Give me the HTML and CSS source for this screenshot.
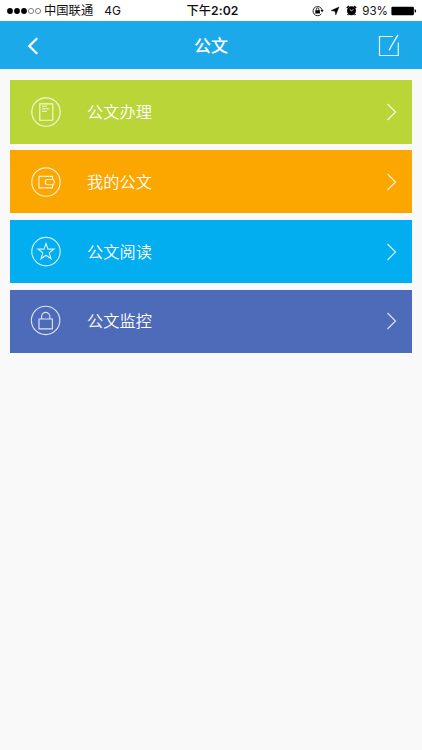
FILE: index.html
```html
<!DOCTYPE html>
<html lang="zh-CN">
<head>
<meta charset="utf-8">
<title>公文</title>
<link rel="stylesheet" href="styles.css">
</head>
<body>
<div class="status">
  <div class="status-left">
    <svg class="signal" width="35" height="8" viewBox="0 0 35 8"><g fill="#000"><circle cx="3" cy="4" r="2.9"/><circle cx="10" cy="4" r="2.9"/><circle cx="17" cy="4" r="2.9"/></g><g fill="none" stroke="#333" stroke-width=".6"><circle cx="24" cy="4" r="2.6"/><circle cx="31" cy="4" r="2.6"/></g></svg>
    <span class="carrier">中国联通</span><span class="network">4G</span>
  </div>
  <div class="clock"><span class="period">下午</span>2:02</div>
  <div class="status-right">
    <svg class="lock" width="12" height="12" viewBox="0 0 12 12"><path d="M9.3 8.9A4.6 4.6 0 1 1 10.1 5" fill="none" stroke="#111" stroke-width=".9"/><path d="M8.5 5h3.2l-1.6 2.3z"/><path d="M3.3 5.2h4.6v3.3H3.3z"/><path d="M4.3 5.4V4.2a1.3 1.3 0 0 1 2.6 0v1.2" fill="none" stroke="#000" stroke-width=".8"/></svg>
    <svg class="locate" width="10" height="10" viewBox="0 0 10 10"><path d="M9 1 5.8 9.1 5 5.2 1 4.6z" stroke="#000" stroke-width=".4"/></svg>
    <svg class="alarm" width="11" height="11" viewBox="0 0 11 11"><circle cx="5.5" cy="5.7" r="4.5"/><path d="M.8 3.1 3 1M8 1l2.2 2.1M2.4 9.2l-.8.8M8.6 9.2l.8.8" stroke="#000" stroke-width="1.4"/><path d="M3.7 4.3 5.5 6l1.8-1.8" fill="none" stroke="#fff" stroke-width=".8"/></svg>
    <span class="percent">93%</span>
    <svg class="battery" width="26" height="10" viewBox="0 0 26 10"><rect x=".4" y=".8" width="22.5" height="8.5" rx="1.2"/><path d="M23.7 3.3q1.5.2 1.5 1.7t-1.5 1.7z"/></svg>
  </div>
</div>
<header class="header">
  <svg class="back" width="14" height="20" viewBox="0 0 14 20"><path d="M12.2 2.2 4.3 10l7.9 7.8" fill="none" stroke="#fff" stroke-width="2.3"/></svg>
  <h1 class="title">公文</h1>
  <svg class="edit" width="22" height="24" viewBox="0 0 22 24"><path d="M15 2.5H1.5v19h18.8V8.5" fill="none" stroke="#e4f7ff" stroke-width="1.2"/><path d="M20 .8 12.6 13.2l-1.4 3.1" fill="none" stroke="#e4f7ff" stroke-width="1.4"/></svg>
</header>
<main class="menu">
  <div class="item green">
    <svg class="icon" width="30" height="30" viewBox="0 0 30 30"><circle cx="15" cy="15" r="14.2"/><path d="M8.8 6.8h13v16.4h-13zM11 9.2h5M11 11.7h7M11 14.2h5"/></svg>
    <span class="label">公文办理</span>
    <svg class="arrow" width="12" height="18" viewBox="0 0 12 18"><path d="m1.5 1 8 8-8 8"/></svg>
  </div>
  <div class="item orange">
    <svg class="icon" width="30" height="30" viewBox="0 0 30 30"><circle cx="15" cy="15" r="14.2"/><path d="M21.5 12.5V9.4H8v11.4h13.5v-3M22.6 12.5h-5.8a2.6 2.6 0 0 0 0 5.2h5.8q1.4-2.6 0-5.2z"/></svg>
    <span class="label">我的公文</span>
    <svg class="arrow" width="12" height="18" viewBox="0 0 12 18"><path d="m1.5 1 8 8-8 8"/></svg>
  </div>
  <div class="item blue">
    <svg class="icon" width="30" height="30" viewBox="0 0 30 30"><circle cx="15" cy="14.6" r="14.2"/><path d="m15 6.4 2 5.7h6l-4.8 3.7 1.8 6-5-3.6-5 3.6 1.8-6L7 12.1h6z"/></svg>
    <span class="label">公文阅读</span>
    <svg class="arrow" width="12" height="18" viewBox="0 0 12 18"><path d="m1.5 1 8 8-8 8"/></svg>
  </div>
  <div class="item indigo">
    <svg class="icon" width="30" height="30" viewBox="0 0 30 30"><circle cx="14.6" cy="14.4" r="14.2"/><path d="M8 13h13.4v9.8H8zM10.6 13v-2.5a4.1 4.1 0 0 1 8.2 0V13"/></svg>
    <span class="label">公文监控</span>
    <svg class="arrow" width="12" height="18" viewBox="0 0 12 18"><path d="m1.5 1 8 8-8 8"/></svg>
  </div>
</main>
</body>
</html>
```
FILE: styles.css
```css
* { box-sizing: border-box; }
body {
  margin: 0;
  min-height: 750px;
  background: #f9f9f9;
  font-family: Inter, "Noto Sans CJK SC", sans-serif;
}
svg { display: block; flex: none; overflow: visible; }
.status {
  display: grid;
  grid-template-columns: 1fr 60px 1fr;
  align-items: center;
  height: 21px;
  background: #fff;
  color: #111;
  font-size: 12px;
  line-height: 20px;
  white-space: nowrap;
}
.status-left { display: flex; align-items: center; padding-left: 7px; }
.carrier { margin-left: 2px; font-size: 12.3px; }
.network { margin-left: 11px; font-size: 12px; }
.clock { text-align: center; font-size: 12.2px; font-weight: 600; letter-spacing: .1px; padding-left: 3px; }
.period { font-weight: 500; }
.status-right { display: flex; align-items: center; justify-content: flex-end; padding-right: 5px; }
.locate { margin-left: 6px; }
.alarm { margin-left: 6px; }
.percent { margin-left: 5px; font-size: 11.6px; }
.battery { margin-left: 3px; }
.header {
  display: flex;
  align-items: center;
  justify-content: space-between;
  height: 48px;
  padding: 2px 22px 0 25px;
  background: #1ba9ea;
}
.title { margin: 0; font-size: 17px; line-height: 24px; font-weight: 500; color: #fff; padding-left: 5px; }
.menu { display: flex; flex-direction: column; gap: 6.5px; padding: 11.4px 10.4px 0; }
.item { display: flex; align-items: center; height: 63.3px; padding: 0 14px 0 20.4px; color: #fff; }
.icon, .arrow { fill: none; stroke: #fff; stroke-opacity: .82; stroke-width: 1.15; }
.label { flex: 1; margin-left: 26.3px; font-size: 16.2px; line-height: 24px; font-weight: 350; }
.green { background: #bad538; }
.orange { background: #fba700; }
.blue { background: #02adf0; }
.indigo { background: #4e6bba; }
```
